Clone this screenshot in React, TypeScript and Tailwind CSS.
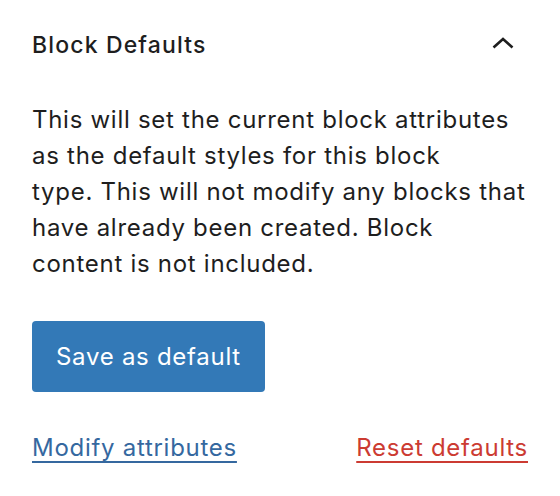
const ChevronUp = () => (
  <svg width="22" height="12" viewBox="0 0 22 12" fill="none" className="mb-[4px] text-[#1e1e1e]">
    <path d="M1.5 10.5 L11 2 L20.5 10.5" stroke="currentColor" strokeWidth="2.6" />
  </svg>
);

export default function App() {
  return (
    <div className="min-h-screen w-[560px] bg-white px-8 text-[#1e1e1e] font-['Inter',sans-serif]">
      <div className="flex items-center justify-between pt-[31px]">
        <h2 className="text-[23px] font-medium leading-[28px] tracking-[0.05em]">Block Defaults</h2>
        <button className="mr-[14px] flex" aria-label="Collapse">
          <ChevronUp />
        </button>
      </div>

      <p className="mt-[43px] text-[24px] leading-[36px] tracking-[0.03em]">
        This will set the current block attributes
        <br />
        as the default styles for this block
        <br />
        type. This will not modify any blocks that
        <br />
        have already been created. Block
        <br />
        content is not included.
      </p>

      <button className="mt-[39px] h-[71px] rounded-[4px] bg-[#3379b7] px-6 text-[24px] tracking-[0.03em] text-white">
        Save as default
      </button>

      <div className="mt-[42px] flex items-center justify-between text-[24px] leading-[28px] tracking-[0.03em]">
        <a href="#" className="text-[#35689f] underline decoration-[1.5px] underline-offset-[5px]">
          Modify attributes
        </a>
        <a href="#" className="text-[#cc3b32] underline decoration-[1.5px] underline-offset-[5px]">
          Reset defaults
        </a>
      </div>
    </div>
  );
}
